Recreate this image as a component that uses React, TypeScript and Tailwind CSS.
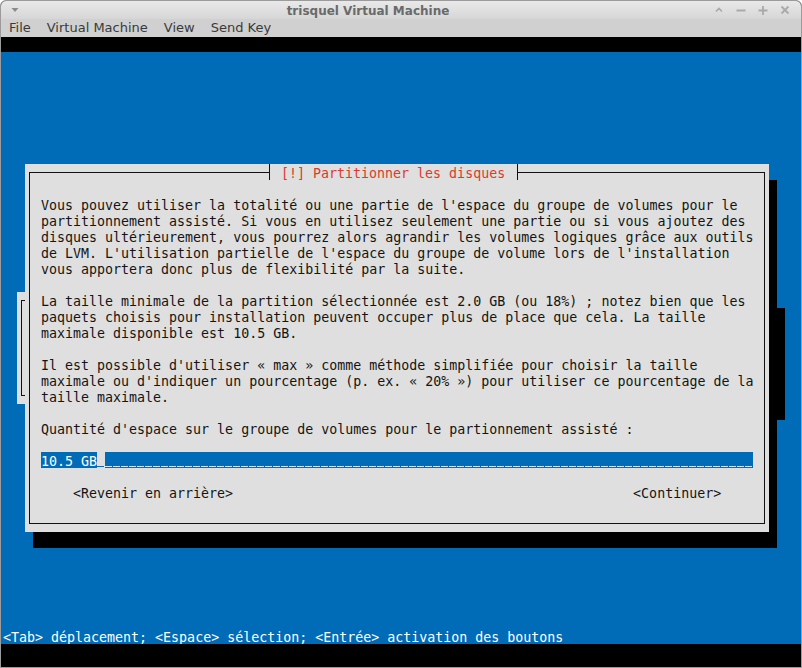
import React from 'react';

const mono = "font-['DejaVu_Sans_Mono','Liberation_Mono',monospace] text-[13.3px] leading-[20px]";

// box-drawing tee used on the dialog frame around the title
const Tee: React.FC<{ side: 'left' | 'right' }> = ({ side }) => (
  <svg width="8" height="16" viewBox="0 0 8 16" className="block">
    <line x1="4.5" y1="0" x2="4.5" y2="16" stroke="#111" strokeWidth="1" />
    {side === 'left' ? (
      <line x1="0" y1="8.5" x2="5" y2="8.5" stroke="#111" strokeWidth="1" />
    ) : (
      <line x1="4" y1="8.5" x2="8" y2="8.5" stroke="#111" strokeWidth="1" />
    )}
  </svg>
);

const WinControls = () => (
  <div className="flex items-center gap-[10px] w-[90px] pl-[2px] text-[#a9a9a9]">
    <svg width="12" height="12" viewBox="0 0 12 12">
      <path d="M3 7.5 L6 4.5 L9 7.5" fill="none" stroke="currentColor" strokeWidth="1.6" />
    </svg>
    <svg width="12" height="12" viewBox="0 0 12 12">
      <line x1="1.5" y1="6.5" x2="10.5" y2="6.5" stroke="currentColor" strokeWidth="1.8" />
    </svg>
    <svg width="12" height="12" viewBox="0 0 12 12">
      <line x1="1.5" y1="6.5" x2="10.5" y2="6.5" stroke="currentColor" strokeWidth="1.8" />
      <line x1="6" y1="2" x2="6" y2="11" stroke="currentColor" strokeWidth="1.8" />
    </svg>
    <svg width="12" height="12" viewBox="0 0 12 12">
      <line x1="2.5" y1="2.5" x2="9.5" y2="9.5" stroke="currentColor" strokeWidth="1.8" />
      <line x1="9.5" y1="2.5" x2="2.5" y2="9.5" stroke="currentColor" strokeWidth="1.8" />
    </svg>
  </div>
);

const lines: string[] = [
  "Vous pouvez utiliser la totalité ou une partie de l'espace du groupe de volumes pour le",
  "partitionnement assisté. Si vous en utilisez seulement une partie ou si vous ajoutez des",
  "disques ultérieurement, vous pourrez alors agrandir les volumes logiques grâce aux outils",
  "de LVM. L'utilisation partielle de l'espace du groupe de volume lors de l'installation",
  "vous apportera donc plus de flexibilité par la suite.",
  '',
  'La taille minimale de la partition sélectionnée est 2.0 GB (ou 18%) ; notez bien que les',
  'paquets choisis pour installation peuvent occuper plus de place que cela. La taille',
  'maximale disponible est 10.5 GB.',
  '',
  "Il est possible d'utiliser « max » comme méthode simplifiée pour choisir la taille",
  "maximale ou d'indiquer un pourcentage (p. ex. « 20% ») pour utiliser ce pourcentage de la",
  'taille maximale.',
  '',
  "Quantité d'espace sur le groupe de volumes pour le partionnement assisté :",
  '',
];

const App: React.FC = () => {
  return (
    <div className="w-[802px] h-[668px] flex flex-col bg-black border border-[#9b9b9b] rounded-t-[6px] overflow-hidden">
      {/* title bar */}
      <div className="h-[18px] flex items-center bg-gradient-to-b from-[#e9e9e9] to-[#d6d6d6]">
        <div className="w-[24px] flex justify-center pl-[4px] text-[#8a8a8a]">
          <svg width="10" height="8" viewBox="0 0 10 8">
            <path d="M1.5 2 L8.5 2 L5 6 Z" fill="currentColor" />
          </svg>
        </div>
        <div className="flex-1 text-center font-['DejaVu_Sans',sans-serif] font-bold text-[12px] text-[#6a6a6a] pt-[2px]">
          trisquel Virtual Machine
        </div>
        <WinControls />
      </div>

      {/* menu bar */}
      <div className="h-[18px] flex items-center bg-[#d0d0d0] font-['DejaVu_Sans',sans-serif] text-[13px] text-[#3a3a3a]">
        {['File', 'Virtual Machine', 'View', 'Send Key'].map((m) => (
          <span key={m} className="px-2 leading-[18px]">
            {m}
          </span>
        ))}
      </div>

      <div className="h-[15px] bg-black" />

      {/* text console, 100 x 37 cells of 8 x 16 */}
      <div
        className={`w-[800px] h-[592px] bg-[#006bb6] grid grid-cols-[repeat(100,8px)] grid-rows-[repeat(37,16px)] text-[#141414] ${mono}`}
      >
        {/* dialog behind, mostly hidden */}
        <div className="col-[3/98] row-[16/23] bg-[#dfdfdf] px-[4px] py-[8px]">
          <div className="h-full border border-[#111]" />
        </div>
        <div className="col-[98/99] row-[17/24] bg-black" />

        {/* shadow of the main dialog */}
        <div className="col-[5/98] row-[9/32] bg-black" />

        {/* main dialog */}
        <div className="col-[4/97] row-[8/31] bg-[#dfdfdf] px-[4px] py-[8px]">
          <div className="h-full border border-[#111]" />
        </div>

        {/* title */}
        <div className="col-[34/35] row-[8/9] bg-[#dfdfdf]">
          <Tee side="left" />
        </div>
        <div className="col-[35/65] row-[8/9] h-4 overflow-visible bg-[#dfdfdf] text-[#dc3a2c] whitespace-pre">
          {' [!] Partitionner les disques '}
        </div>
        <div className="col-[65/66] row-[8/9] bg-[#dfdfdf]">
          <Tee side="right" />
        </div>

        {/* dialog body */}
        <div className="col-[6/95] row-[10/29] flex flex-col">
          {lines.map((l, i) => (
            <div key={i} className="h-4 whitespace-pre">
              {l}
            </div>
          ))}
          <div className="h-4 flex whitespace-pre">
            <div className="h-4 w-[56px] bg-[#006bb6] text-white">10.5 GB</div>
            <div className="h-4 w-[8px] flex items-end pb-[1px]">
              <div className="h-[1px] w-[7px] bg-[#006bb6]" />
            </div>
            <div className="h-4 w-[648px] bg-[#006bb6] flex items-end pb-[1px]">
              <div className="h-[1px] w-full bg-[repeating-linear-gradient(90deg,#d8e2ea_0_7px,transparent_7px_8px)]" />
            </div>
          </div>
          <div className="h-4" />
          <div className="h-4 flex whitespace-pre">
            <span className="ml-[32px]">&lt;Revenir en arrière&gt;</span>
            <span className="ml-[400px]">&lt;Continuer&gt;</span>
          </div>
        </div>

        {/* status line */}
        <div className="col-[1/101] row-[37/38] h-4 text-white whitespace-pre pl-[2px]">
          {'<Tab> déplacement; <Espace> sélection; <Entrée> activation des boutons'}
        </div>
      </div>

      <div className="flex-1 bg-black" />
    </div>
  );
};

export default App;
